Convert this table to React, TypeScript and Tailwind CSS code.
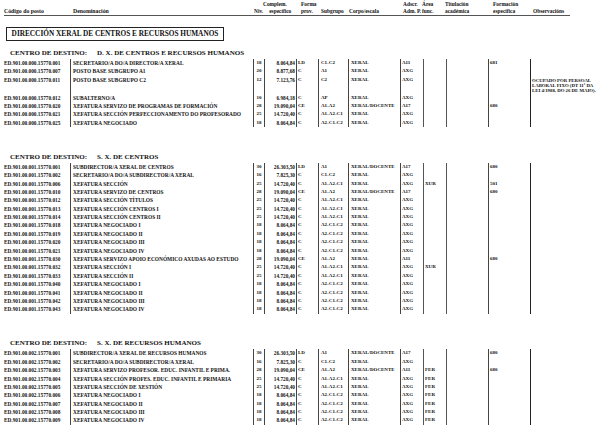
import React from "react";

type Row = {
  c: string;
  n: string;
  nv: string;
  cp: string;
  f: string;
  s: string;
  co: string;
  a: string;
  ar?: string;
  t?: string;
  fo?: string;
  obs?: string[];
  tall?: boolean;
};

const neg = (c: string, n: string, ar?: string): Row => ({
  c,
  n,
  nv: "18",
  cp: "8.064,84",
  f: "C",
  s: "A2-C1-C2",
  co: "XERAL",
  a: "AXG",
  ar,
});

const sec = (c: string, n: string, ar?: string, fo?: string): Row => ({
  c,
  n,
  nv: "25",
  cp: "14.720,40",
  f: "C",
  s: "A1-A2-C1",
  co: "XERAL",
  a: "AXG",
  ar,
  fo,
});

const S1: Row[] = [
  { c: "001", n: "SECRETARIO/A DO/A DIRECTOR/A XERAL", nv: "18", cp: "8.064,84", f: "LD", s: "C1-C2", co: "XERAL", a: "A11", fo: "681" },
  { c: "007", n: "POSTO BASE SUBGRUPO A1", nv: "20", cp: "8.877,68", f: "C", s: "A1", co: "XERAL", a: "AXG" },
  {
    c: "011",
    n: "POSTO BASE SUBGRUPO C2",
    nv: "12",
    cp: "7.123,76",
    f: "C",
    s: "C2",
    co: "XERAL",
    a: "AXG",
    obs: ["OCUPADO POR PERSOAL", "LABORAL FIXO (DT 11ª DA", "LEI 4/1988, DO 26 DE MAIO)."],
    tall: true,
  },
  { c: "012", n: "SUBALTERNO/A", nv: "10", cp: "6.984,18", f: "C", s: "AP", co: "XERAL", a: "AXG" },
  { c: "020", n: "XEFATURA SERVIZO DE PROGRAMAS DE FORMACIÓN", nv: "28", cp: "19.090,04", f: "CE", s: "A1-A2", co: "XERAL/DOCENTE", a: "A17", fo: "680" },
  sec("021", "XEFATURA SECCIÓN PERFECCIONAMENTO DO PROFESORADO"),
  neg("025", "XEFATURA NEGOCIADO"),
];

const S2: Row[] = [
  { c: "001", n: "SUBDIRECTOR/A XERAL DE CENTROS", nv: "30", cp: "26.303,50", f: "LD", s: "A1", co: "XERAL/DOCENTE", a: "A17", fo: "680" },
  { c: "002", n: "SECRETARIO/A DO/A SUBDIRECTOR/A XERAL", nv: "16", cp: "7.825,30", f: "C", s: "C1-C2", co: "XERAL", a: "AXG" },
  sec("006", "XEFATURA SECCIÓN", "XUR", "501"),
  { c: "010", n: "XEFATURA SERVIZO DE CENTROS", nv: "28", cp: "19.090,04", f: "CE", s: "A1-A2", co: "XERAL/DOCENTE", a: "A17", fo: "680" },
  sec("012", "XEFATURA SECCIÓN TÍTULOS"),
  sec("013", "XEFATURA SECCIÓN CENTROS I"),
  sec("014", "XEFATURA SECCIÓN CENTROS II"),
  neg("018", "XEFATURA NEGOCIADO I"),
  neg("019", "XEFATURA NEGOCIADO II"),
  neg("020", "XEFATURA NEGOCIADO III"),
  neg("021", "XEFATURA NEGOCIADO IV"),
  { c: "030", n: "XEFATURA SERVIZO APOIO ECONÓMICO AXUDAS AO ESTUDO", nv: "28", cp: "19.090,04", f: "CE", s: "A1-A2", co: "XERAL", a: "A11", fo: "680" },
  sec("032", "XEFATURA SECCIÓN I", "XUR"),
  sec("033", "XEFATURA SECCIÓN II"),
  neg("040", "XEFATURA NEGOCIADO I"),
  neg("041", "XEFATURA NEGOCIADO II"),
  neg("042", "XEFATURA NEGOCIADO III"),
  neg("043", "XEFATURA NEGOCIADO IV"),
];

const S3: Row[] = [
  { c: "001", n: "SUBDIRECTOR/A XERAL DE RECURSOS HUMANOS", nv: "30", cp: "26.303,50", f: "LD", s: "A1", co: "XERAL/DOCENTE", a: "A17", fo: "680" },
  { c: "002", n: "SECRETARIO/A DO/A SUBDIRECTOR/A XERAL", nv: "16", cp: "7.825,30", f: "C", s: "C1-C2", co: "XERAL", a: "AXG" },
  { c: "003", n: "XEFATURA SERVIZO PROFESOR. EDUC. INFANTIL E PRIMA.", nv: "28", cp: "19.090,04", f: "CE", s: "A1-A2", co: "XERAL/DOCENTE", a: "A11", ar: "FER", fo: "680" },
  sec("004", "XEFATURA SECCIÓN PROFES. EDUC. INFANTIL E PRIMARIA", "FER"),
  sec("005", "XEFATURA SECCIÓN DE XESTIÓN", "FER"),
  neg("006", "XEFATURA NEGOCIADO I", "FER"),
  neg("007", "XEFATURA NEGOCIADO II", "FER"),
  neg("008", "XEFATURA NEGOCIADO III", "FER"),
  neg("009", "XEFATURA NEGOCIADO IV", "FER"),
];

function DataRow({ r, prefix }: { r: Row; prefix: string }) {
  return (
    <div className={`flex ${r.tall ? "h-[18px]" : "h-[8.4px]"} text-[5px] font-bold leading-[8.4px] whitespace-nowrap`}>
      <div className="w-[66px] shrink-0 text-[5.3px]">{prefix + r.c}</div>
      <div className="w-[183px] shrink-0 border-l border-[#444] pl-[2px] text-[5.4px]">{r.n}</div>
      <div className="w-[11px] shrink-0 border-l border-[#444] text-center">{r.nv}</div>
      <div className="w-[32px] shrink-0 border-l border-[#444] pr-[1px] text-right text-[5.3px]">{r.cp}</div>
      <div className="w-[22px] shrink-0 border-l border-[#444] pl-[1px]">{r.f}</div>
      <div className="w-[30px] shrink-0 border-l border-[#444] pl-[2px]">{r.s}</div>
      <div className="w-[52px] shrink-0 border-l border-[#444] pl-[2px]">{r.co}</div>
      <div className="w-[23px] shrink-0 border-l border-[#444] pl-[1px]">{r.a}</div>
      <div className="w-[23px] shrink-0 border-l border-[#555] pl-[1px]">{r.ar ?? ""}</div>
      <div className="w-[42px] shrink-0 border-l border-[#555] pl-[1px]">{r.t ?? ""}</div>
      <div className="w-[42px] shrink-0 border-l border-[#444] pl-[1px]">{r.fo ?? ""}</div>
      <div className="w-[70px] shrink-0 border-l border-[#222] pl-[1px]">
        {r.obs ? (
          <div className="pt-[2px] text-[4.8px] leading-[5.4px]">
            {r.obs.map((l) => (
              <div key={l}>{l}</div>
            ))}
          </div>
        ) : null}
      </div>
    </div>
  );
}

function Section({ title, rows, prefix, first }: { title: string; rows: Row[]; prefix: string; first?: boolean }) {
  return (
    <div className={first ? "mt-[7px]" : "mt-[24.8px]"}>
      <div className="flex h-[10.8px] items-center pl-[6px] text-[7px] font-bold leading-none whitespace-nowrap">
        <span>CENTRO DE DESTINO:</span>
        <span className="ml-[10px]">{title}</span>
      </div>
      <div>
        {rows.map((r) => (
          <DataRow key={r.c + r.n} r={r} prefix={prefix} />
        ))}
      </div>
    </div>
  );
}

function Header() {
  return (
    <div className="flex w-[566px] border-b border-[#555] text-[5.4px] font-bold leading-[7px] whitespace-nowrap">
      <div className="flex w-[69px] shrink-0 flex-col">
        <span>&nbsp;</span>
        <span className="text-[5.8px]">Código do posto</span>
      </div>
      <div className="flex w-[181px] shrink-0 flex-col">
        <span>&nbsp;</span>
        <span className="text-[5.8px]">Denominación</span>
      </div>
      <div className="flex w-[47px] shrink-0 flex-col">
        <span className="pl-[9px]">Complem.</span>
        <span>
          Niv.<span className="ml-[6px]">específico</span>
        </span>
      </div>
      <div className="flex w-[20px] shrink-0 flex-col">
        <span>Forma</span>
        <span>prov.</span>
      </div>
      <div className="flex w-[28px] shrink-0 flex-col">
        <span>&nbsp;</span>
        <span>Subgrupo</span>
      </div>
      <div className="flex w-[54px] shrink-0 flex-col">
        <span>&nbsp;</span>
        <span>Corpo/escala</span>
      </div>
      <div className="flex w-[18px] shrink-0 flex-col">
        <span>Adscr.</span>
        <span>Adm. P.</span>
      </div>
      <div className="flex w-[24px] shrink-0 flex-col pl-[1px]">
        <span>Área</span>
        <span>func.</span>
      </div>
      <div className="flex w-[48px] shrink-0 flex-col">
        <span>Titulación</span>
        <span>académica</span>
      </div>
      <div className="flex w-[40px] shrink-0 flex-col">
        <span>Formación</span>
        <span>específica</span>
      </div>
      <div className="flex shrink-0 flex-col">
        <span>&nbsp;</span>
        <span>Observacións</span>
      </div>
    </div>
  );
}

export default function App() {
  return (
    <div className="h-[439px] w-[615px] overflow-hidden bg-white pl-[4px] pt-[1px] font-['Liberation_Serif',serif] text-[#111]">
      <Header />
      <div className="mt-[11px] ml-[2px] flex h-[14px] w-[218px] items-center justify-center border-[1.5px] border-[#222] text-[7.3px] font-bold leading-none whitespace-nowrap">
        DIRECCIÓN XERAL DE CENTROS E RECURSOS HUMANOS
      </div>
      <Section first title="D. X. DE CENTROS E RECURSOS HUMANOS" rows={S1} prefix="ED.901.00.000.15770." />
      <Section title="S. X. DE CENTROS" rows={S2} prefix="ED.901.00.001.15770." />
      <Section title="S. X. DE RECURSOS HUMANOS" rows={S3} prefix="ED.901.00.002.15770." />
    </div>
  );
}
